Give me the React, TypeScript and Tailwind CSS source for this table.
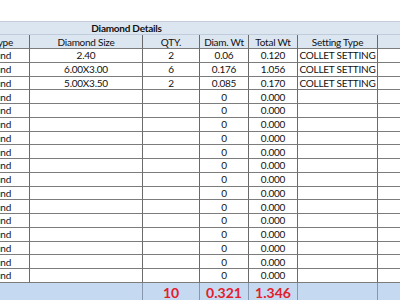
import React from 'react';

type Row = {
  size: string;
  qty: string;
  diam: string;
  total: string;
  setting: string;
};

const filled: Row[] = [
  { size: '2.40', qty: '2', diam: '0.06', total: '0.120', setting: 'COLLET SETTING' },
  { size: '6.00X3.00', qty: '6', diam: '0.176', total: '1.056', setting: 'COLLET SETTING' },
  { size: '5.00X3.50', qty: '2', diam: '0.085', total: '0.170', setting: 'COLLET SETTING' },
];

const rows: Row[] = [
  ...filled,
  ...Array.from({ length: 14 }, () => ({ size: '', qty: '', diam: '0', total: '0.000', setting: '' })),
];

const cell =
  'flex items-center justify-center whitespace-nowrap border-r border-b border-r-[#6a6a6a] border-b-[#7c7c7c]';

const DataRow: React.FC<{ row: Row }> = ({ row }) => (
  <div className="flex h-[13.76px]">
    <div className={`${cell} w-[80px] justify-end pr-[18px]`}>Round</div>
    <div className={`${cell} w-[113px]`}>{row.size}</div>
    <div className={`${cell} w-[57px]`}>{row.qty}</div>
    <div className={`${cell} w-[49px]`}>{row.diam}</div>
    <div className={`${cell} w-[49px]`}>{row.total}</div>
    <div className={`${cell} w-[80px]`}>{row.setting}</div>
    <div className={`${cell} w-[60px]`}></div>
  </div>
);

export default function App() {
  const totalCell = 'flex items-center justify-center border-r border-r-[#8797ad]';
  return (
    <div
      className="w-[400px] h-[300px] overflow-hidden bg-white text-[10px] tracking-[-0.25px] text-[#111] leading-none"
      style={{ fontFamily: 'Lato, "Liberation Sans", sans-serif' }}
    >
      <div className="ml-[-50px] pt-[21px] w-[488px]">
        {/* merged title band */}
        <div className="flex h-[14px] bg-[#dce6f1] border-t border-t-[#c3ccd8] border-b border-b-[#c0cbdb]">
          <div className="w-[353px] flex items-center justify-center font-bold">Diamond Details</div>
        </div>

        {/* column headers */}
        <div className="flex h-[14px] bg-[#dce6f1]">
          <div className={`${cell} w-[80px] justify-end pr-[16px]`}>Stone Type</div>
          <div className={`${cell} w-[113px]`}>Diamond Size</div>
          <div className={`${cell} w-[57px]`}>QTY.</div>
          <div className={`${cell} w-[49px]`}>Diam. Wt</div>
          <div className={`${cell} w-[49px]`}>Total Wt</div>
          <div className={`${cell} w-[80px]`}>Setting Type</div>
          <div className={`${cell} w-[60px]`}></div>
        </div>

        {rows.map((row, i) => (
          <DataRow key={i} row={row} />
        ))}

        {/* totals */}
        <div className="flex h-[20px] bg-[#c5d9f1] text-[14px] tracking-normal font-bold text-[#e3202a]">
          <div className={`${totalCell} w-[193px]`}></div>
          <div className={`${totalCell} w-[57px]`}>10</div>
          <div className={`${totalCell} w-[49px]`}>0.321</div>
          <div className={`${totalCell} w-[49px]`}>1.346</div>
          <div className={`${totalCell} w-[80px]`}></div>
          <div className={`${totalCell} w-[60px]`}></div>
        </div>
      </div>
    </div>
  );
}
